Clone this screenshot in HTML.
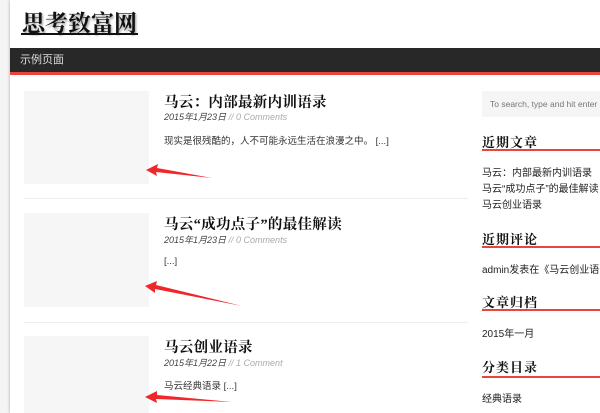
<!DOCTYPE html>
<html><head><meta charset="utf-8"><style>
*{margin:0;padding:0;box-sizing:border-box}
body{width:600px;height:413px;overflow:hidden;background:#f4f4f4;font-family:"Liberation Sans","Noto Sans CJK SC",sans-serif;position:relative}
.page{position:absolute;left:10px;top:0;width:600px;height:413px;background:#fff;box-shadow:-1px 0 2px #ccc}
.a{position:absolute}
.title{left:22px;top:5px;font:bold 23px "Liberation Serif","Noto Serif CJK SC",serif;color:#111;text-shadow:1px 2px 2px #999;letter-spacing:0}
.tline{left:21px;top:33px;width:117px;height:2px;background:#111}
.nav{left:10px;top:48px;width:590px;height:24px;background:#282828;color:#ddd;font-size:11px;line-height:24px;padding-left:10px}
.red{left:10px;top:72px;width:590px;height:3px;background:#e8453c}
.th{left:24px;width:125px;background:#f6f6f6}
.sep{left:24px;width:444px;height:1px;background:#eee}
.pt{left:164px;font:bold 14.5px "Liberation Serif","Noto Serif CJK SC",serif;color:#111;letter-spacing:.3px}
.m{left:164px;font-size:9px;font-style:italic;color:#444}
.m span{color:#aaa}
.ex{left:164px;font-size:9.5px;color:#333}
.search{left:482px;top:91px;width:118px;height:26px;background:#f5f5f5;font-size:8.5px;color:#777;line-height:26px;padding-left:8px;white-space:nowrap;overflow:hidden}
.h{left:482px;font:bold 13px "Liberation Serif","Noto Serif CJK SC",serif;color:#111;letter-spacing:1px}
.hl{left:482px;width:118px;height:2px;background:#e8453c}
.s{left:482px;font-size:10px;color:#222;line-height:16px;white-space:nowrap}
</style></head><body>
<div class="page"></div>
<div class="a title">思考致富网</div>
<div class="a tline"></div>
<div class="a nav">示例页面</div>
<div class="a red"></div>

<div class="a th" style="top:91px;height:93px"></div>
<div class="a sep" style="top:198px"></div>
<div class="a th" style="top:213px;height:94px"></div>
<div class="a sep" style="top:322px"></div>
<div class="a th" style="top:336px;height:77px"></div>

<div class="a pt" style="top:91px">马云：内部最新内训语录</div>
<div class="a m" style="top:110px">2015年1月23日 <span>// 0 Comments</span></div>
<div class="a ex" style="top:133px">现实是很残酷的，人不可能永远生活在浪漫之中。 [...]</div>

<div class="a pt" style="top:213px">马云“成功点子”的最佳解读</div>
<div class="a m" style="top:233px">2015年1月23日 <span>// 0 Comments</span></div>
<div class="a ex" style="top:256px">[...]</div>

<div class="a pt" style="top:336px">马云创业语录</div>
<div class="a m" style="top:356px">2015年1月22日 <span>// 1 Comment</span></div>
<div class="a ex" style="top:378px">马云经典语录 [...]</div>

<div class="a search">To search, type and hit enter</div>
<div class="a h" style="top:132px">近期文章</div>
<div class="a hl" style="top:149px"></div>
<div class="a s" style="top:166px">马云：内部最新内训语录<br>马云“成功点子”的最佳解读<br>马云创业语录</div>
<div class="a h" style="top:229px">近期评论</div>
<div class="a hl" style="top:246px"></div>
<div class="a s" style="top:263px">admin发表在《马云创业语录》</div>
<div class="a h" style="top:292px">文章归档</div>
<div class="a hl" style="top:309px"></div>
<div class="a s" style="top:327px">2015年一月</div>
<div class="a h" style="top:357px">分类目录</div>
<div class="a hl" style="top:376px"></div>
<div class="a s" style="top:392px">经典语录</div>

<svg class="a" style="left:0;top:0" width="600" height="413">
<g fill="#f0262a">
<polygon points="146,170 158,164 157,168 212,178 156,172 157,176"/>
<polygon points="145,286 157,281 156,285 242,306 155,289 155,293"/>
<polygon points="145,397 157,391 157,395 232,402 156,399 157,403"/>
</g>
</svg>
</body></html>
